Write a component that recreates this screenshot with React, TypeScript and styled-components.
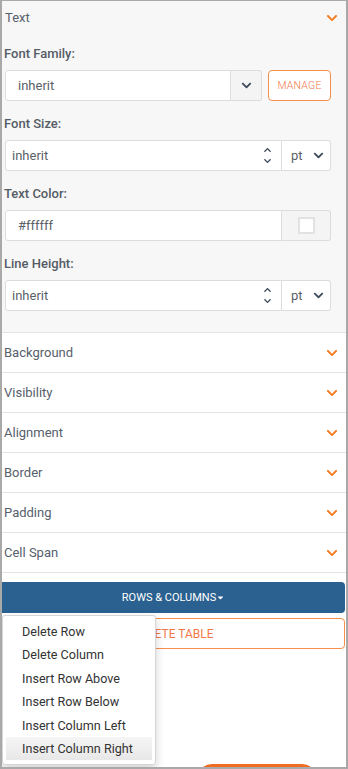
import styled, { createGlobalStyle } from "styled-components";
import { FaChevronDown, FaChevronUp, FaCaretDown } from "react-icons/fa";

const GlobalStyle = createGlobalStyle`
  html, body {
    margin: 0;
    padding: 0;
    background: #fff;
  }
  * {
    box-sizing: border-box;
  }
`;

const Frame = styled.div`
  position: relative;
  width: 348px;
  height: 769px;
  overflow: hidden;
  border: 2px solid #a9a9a9;
  border-top-width: 1px;
  font-family: Roboto, "Liberation Sans", sans-serif;
  font-size: 13px;
  color: #56606b;
  background: #fff;
`;

const OpenSection = styled.section`
  background: #f7f7f7;
  padding: 0 15px 21px 1px;
  border-bottom: 1px solid #e4e4e4;
`;

const SectionHeader = styled.div<{ open?: boolean }>`
  display: flex;
  align-items: center;
  justify-content: space-between;
  height: ${(p) => (p.open ? "33px" : "40px")};
  padding: 0 8px 0 2px;
  margin-right: ${(p) => (p.open ? "-15px" : "0")};
  color: #56606b;
  background: ${(p) => (p.open ? "transparent" : "#fff")};
  border-bottom: ${(p) => (p.open ? "none" : "1px solid #e4e4e4")};
  svg {
    color: #f47b20;
    width: 12px;
    height: 12px;
  }
`;

const FieldLabel = styled.div`
  margin-top: 10px;
  margin-bottom: 6px;
  height: 20px;
  line-height: 20px;
  font-weight: 500;
  color: #555c66;
  padding-left: 1px;
`;

const Field = styled.div`
  margin-bottom: 13px;
  &:last-child {
    margin-bottom: 0;
  }
`;

const InputGroup = styled.div`
  display: flex;
  align-items: stretch;
  height: 31px;
  padding-left: 2px;
`;

const TextBox = styled.div<{ pad?: number }>`
  flex: 1;
  display: flex;
  align-items: center;
  justify-content: space-between;
  background: #fff;
  border: 1px solid #dcdcdc;
  border-radius: 3px 0 0 3px;
  padding: 0 8px 0 ${(p) => p.pad ?? 6}px;
  color: #5a5f68;
`;

const Addon = styled.div<{ w: number; grey?: boolean }>`
  width: ${(p) => p.w}px;
  display: flex;
  align-items: center;
  justify-content: center;
  background: ${(p) => (p.grey ? "#f4f4f4" : "#fff")};
  border: 1px solid #dcdcdc;
  border-left: none;
  border-radius: 0 3px 3px 0;
  color: #3c4a5c;
  svg {
    width: 11px;
    height: 11px;
  }
`;

const UnitSelect = styled(Addon)`
  justify-content: space-between;
  padding: 0 6px 0 9px;
  color: #5a5f68;
  svg {
    color: #3c4a5c;
  }
`;

const Spinner = styled.div`
  display: flex;
  flex-direction: column;
  align-items: center;
  color: #3c4a5c;
  gap: 3px;
  svg {
    width: 11px;
    height: 8px;
  }
`;

const Swatch = styled.div`
  width: 17px;
  height: 17px;
  background: #fff;
  border: 2px solid #e2e2e2;
`;

const ManageButton = styled.button`
  margin-left: 6px;
  width: 63px;
  background: #fff;
  border: 1px solid #f4904c;
  border-radius: 4px;
  color: #f2784a;
  font-family: Roboto, "Liberation Sans", sans-serif;
  font-size: 10.5px;
  font-weight: 300;
  letter-spacing: 0.2px;
  padding: 0;
`;

const Actions = styled.div`
  display: flex;
  flex-direction: column;
  gap: 5px;
  padding: 9px 1px 0 0;
`;

const PrimaryButton = styled.button`
  height: 31px;
  width: 100%;
  background: #2b6190;
  border: none;
  border-radius: 0 4px 4px 0;
  color: #fff;
  font-family: Roboto, "Liberation Sans", sans-serif;
  font-size: 11px;
  display: flex;
  align-items: center;
  justify-content: center;
  svg {
    width: 9px;
    height: 9px;
  }
`;

const OutlineButton = styled.button`
  height: 31px;
  width: 100%;
  background: #fff;
  border: 1px solid #f4904c;
  border-radius: 4px;
  color: #f2784a;
  font-family: Roboto, "Liberation Sans", sans-serif;
  font-size: 12px;
`;

const Footer = styled.div`
  display: flex;
  justify-content: flex-end;
  padding: 115px 29px 0 0;
`;

const SaveButton = styled.div`
  width: 120px;
  height: 30px;
  background: #ef6c22;
  border-radius: 15px;
`;

const Menu = styled.ul`
  position: absolute;
  left: 0;
  top: 614px;
  width: 154px;
  margin: 0;
  padding: 4px 3px;
  list-style: none;
  background: #fff;
  border: 1px solid #d6d6d6;
  border-radius: 3px;
  box-shadow: 0 4px 10px rgba(0, 0, 0, 0.18);
`;

const MenuItem = styled.li<{ active?: boolean }>`
  height: 23.4px;
  line-height: 23.4px;
  padding-left: 16px;
  color: #333;
  font-size: 12.6px;
  white-space: nowrap;
  background: ${(p) =>
    p.active ? "linear-gradient(#f5f5f5, #e8e8e8)" : "transparent"};
`;

const collapsed = [
  "Background",
  "Visibility",
  "Alignment",
  "Border",
  "Padding",
  "Cell Span",
];

const menuItems = [
  "Delete Row",
  "Delete Column",
  "Insert Row Above",
  "Insert Row Below",
  "Insert Column Left",
  "Insert Column Right",
];

function NumberField({ label }: { label: string }) {
  return (
    <Field>
      <FieldLabel>{label}</FieldLabel>
      <InputGroup>
        <TextBox>
          inherit
          <Spinner>
            <FaChevronUp />
            <FaChevronDown />
          </Spinner>
        </TextBox>
        <UnitSelect w={49}>
          pt
          <FaChevronDown />
        </UnitSelect>
      </InputGroup>
    </Field>
  );
}

function App() {
  return (
    <>
      <GlobalStyle />
      <Frame>
        <OpenSection>
          <SectionHeader open>
            Text
            <FaChevronDown />
          </SectionHeader>

          <Field>
            <FieldLabel>Font Family:</FieldLabel>
            <InputGroup>
              <TextBox pad={12}>inherit</TextBox>
              <Addon w={31} grey>
                <FaChevronDown />
              </Addon>
              <ManageButton>MANAGE</ManageButton>
            </InputGroup>
          </Field>

          <NumberField label="Font Size:" />

          <Field>
            <FieldLabel>Text Color:</FieldLabel>
            <InputGroup>
              <TextBox pad={12}>#ffffff</TextBox>
              <Addon w={49} grey>
                <Swatch />
              </Addon>
            </InputGroup>
          </Field>

          <NumberField label="Line Height:" />
        </OpenSection>

        {collapsed.map((title) => (
          <SectionHeader key={title}>
            {title}
            <FaChevronDown />
          </SectionHeader>
        ))}

        <Actions>
          <PrimaryButton>
            ROWS &amp; COLUMNS
            <FaCaretDown />
          </PrimaryButton>
          <OutlineButton>DELETE TABLE</OutlineButton>
        </Actions>

        <Footer>
          <SaveButton />
        </Footer>

        <Menu>
          {menuItems.map((item) => (
            <MenuItem key={item} active={item === "Insert Column Right"}>
              {item}
            </MenuItem>
          ))}
        </Menu>
      </Frame>
    </>
  );
}

export default App;
